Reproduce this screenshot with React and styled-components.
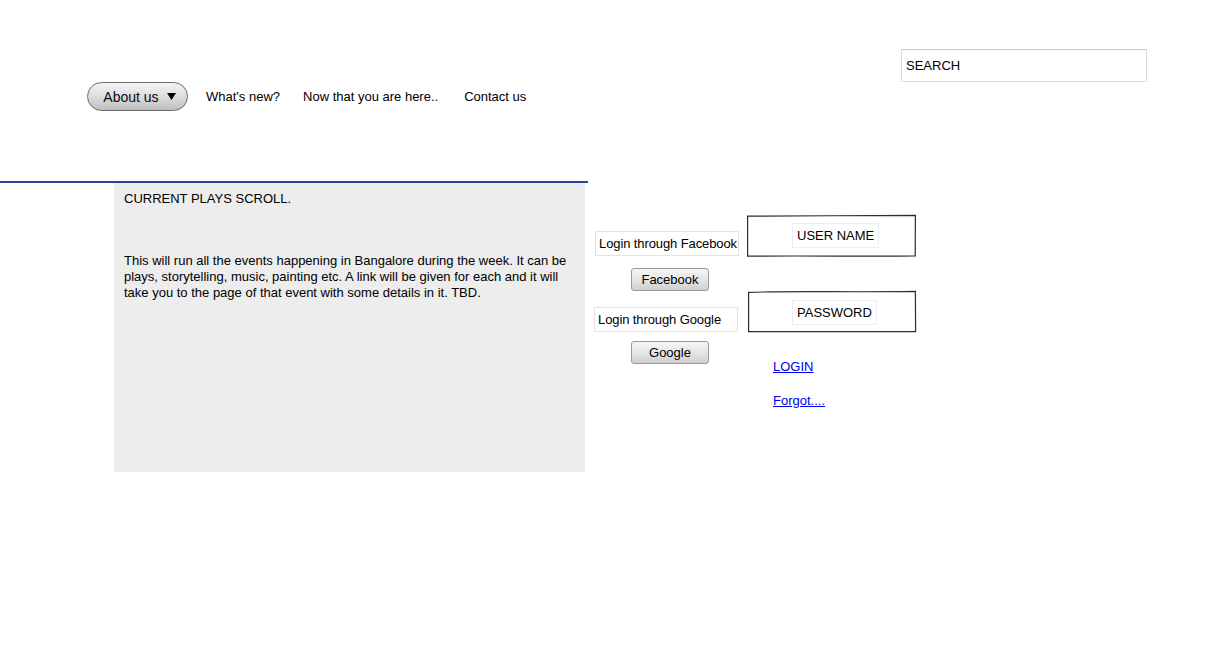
import React from "react";
import styled, { createGlobalStyle } from "styled-components";

const Global = createGlobalStyle`
  html, body { margin: 0; padding: 0; background: #fff; }
  body { font-family: "Liberation Sans", Arial, sans-serif; color: #000; }
`;

const Page = styled.div`
  width: 1211px;
  min-height: 667px;
  display: flex;
  flex-direction: column;
`;

const TopBar = styled.div`
  display: flex;
  justify-content: flex-end;
  padding: 49px 64px 0 0;
`;

const Search = styled.input`
  box-sizing: border-box;
  width: 246px;
  height: 33px;
  border: 1px solid #dcdcdc;
  border-top-color: #c8c8c8;
  padding: 0 4px;
  font: 13px "Liberation Sans", Arial, sans-serif;
  color: #000;
  outline: none;
  &::placeholder { color: #000; opacity: 1; }
`;

const Nav = styled.nav`
  display: flex;
  align-items: center;
  gap: 23px;
  padding-left: 87px;
  height: 29px;
`;

const MenuButton = styled.button`
  box-sizing: border-box;
  height: 29px;
  width: 101px;
  margin-right: -5px;
  border: 1px solid #6b6b6b;
  border-radius: 15px;
  background: linear-gradient(#f4f4f4, #e0e0e0 45%, #bebebe);
  display: flex;
  align-items: center;
  justify-content: center;
  gap: 8px;
  padding: 0 0 0 4px;
  font: 14px "Liberation Sans", Arial, sans-serif;
  color: #0a0a1a;
  cursor: pointer;
`;

const NavLink = styled.span`
  font-size: 13px;
  color: #000;
  white-space: nowrap;
  margin-left: ${(p) => p.$ml || 0}px;
`;

const Main = styled.div`
  display: flex;
  align-items: flex-start;
  margin-top: 70px;
`;

const LeftCol = styled.div`
  width: 588px;
  border-top: 2px solid #2c3f99;
`;

const Panel = styled.div`
  box-sizing: border-box;
  margin-left: 114px;
  width: 471px;
  height: 289px;
  background: #ededed;
  padding: 8px 10px 0 10px;
  font-size: 13px;
  line-height: 16px;
`;

const PanelTitle = styled.div`
  margin-bottom: 46px;
`;

const PanelText = styled.p`
  margin: 0;
`;

const MidCol = styled.div`
  display: flex;
  flex-direction: column;
  width: 144px;
  margin-left: 6px;
`;

const SocialInput = styled.input`
  box-sizing: border-box;
  width: 144px;
  height: 25px;
  margin-top: ${(p) => p.$top}px;
  margin-left: ${(p) => p.$shift || 0}px;
  border: 1px solid #e2e2e2;
  padding: 0 0 0 3px;
  font: 13px "Liberation Sans", Arial, sans-serif;
  letter-spacing: -0.1px;
  color: #000;
  background: #fff;
  outline: none;
`;

const GreyButton = styled.button`
  box-sizing: border-box;
  width: 78px;
  height: 23px;
  margin-top: ${(p) => p.$top}px;
  margin-left: 37px;
  border: 1px solid #9a9a9a;
  border-radius: 3px;
  background: linear-gradient(#f6f6f6, #e6e6e6 50%, #cfcfcf);
  font: 13px "Liberation Sans", Arial, sans-serif;
  color: #000;
  padding: 0;
  cursor: pointer;
`;

const RightCol = styled.div`
  display: flex;
  flex-direction: column;
  margin-left: 9px;
`;

const SketchBox = styled.div`
  position: relative;
  box-sizing: border-box;
  width: 169px;
  height: 42px;
  margin-top: ${(p) => p.$top}px;
  margin-left: ${(p) => p.$shift || 0}px;
  display: flex;
  align-items: flex-start;
  padding-left: ${(p) => 45 - (p.$shift || 0)}px;
  padding-top: ${(p) => p.$pt}px;
`;

const SketchFrame = styled.svg`
  position: absolute;
  inset: 0;
  width: 100%;
  height: 100%;
  overflow: visible;
  pointer-events: none;
`;

const FieldLabel = styled.div`
  box-sizing: border-box;
  position: relative;
  height: 25px;
  padding: 0 4px;
  border: 1px solid #e8eef4;
  background: #fff;
  font-size: 13px;
  line-height: 23px;
  white-space: nowrap;
`;

const TextLink = styled.a`
  margin-top: ${(p) => p.$top}px;
  margin-left: 26px;
  font-size: 13px;
  line-height: 15px;
  color: #0000ee;
  text-decoration: underline;
  align-self: flex-start;
  cursor: pointer;
`;

const Sketch = ({ d }) => (
  <SketchFrame viewBox="0 0 169 42" preserveAspectRatio="none">
    <path d={d} fill="none" stroke="#2e2e2e" strokeWidth="1.2" />
  </SketchFrame>
);

export default function App() {
  return (
    <Page>
      <Global />
      <TopBar>
        <Search placeholder="SEARCH" />
      </TopBar>
      <Nav>
        <MenuButton>
          About us
          <svg width="9" height="7" viewBox="0 0 9 7">
            <path d="M0 0 H9 L4.5 7 Z" fill="#000" />
          </svg>
        </MenuButton>
        <NavLink>What's new?</NavLink>
        <NavLink>Now that you are here..</NavLink>
        <NavLink $ml={3}>Contact us</NavLink>
      </Nav>
      <Main>
        <LeftCol>
          <Panel>
            <PanelTitle>CURRENT PLAYS SCROLL.</PanelTitle>
            <PanelText>
              This will run all the events happening in Bangalore during the week. It can be
              plays, storytelling, music, painting etc. A link will be given for each and it will
              take you to the page of that event with some details in it. TBD.
            </PanelText>
          </Panel>
        </LeftCol>
        <MidCol>
          <SocialInput $top={50} $shift={1} defaultValue="Login through Facebook" readOnly />
          <GreyButton $top={12}>Facebook</GreyButton>
          <SocialInput $top={16} defaultValue="Login through Google" readOnly />
          <GreyButton $top={9}>Google</GreyButton>
        </MidCol>
        <RightCol>
          <SketchBox $top={34} $pt={8}>
            <Sketch d="M0.6 1.2 C50 0.6 120 0.8 168.4 0.4 L168.2 41 C120 41.6 60 40.6 0.6 41.2 Z" />
            <FieldLabel>USER NAME</FieldLabel>
          </SketchBox>
          <SketchBox $top={34} $shift={1} $pt={9}>
            <Sketch d="M0.6 1.4 C40 -0.2 100 1.4 167.4 0.4 L167.6 40.6 C110 40.8 50 40.6 0.6 40.6 Z" />
            <FieldLabel>PASSWORD</FieldLabel>
          </SketchBox>
          <TextLink $top={26}>LOGIN</TextLink>
          <TextLink $top={19}>Forgot....</TextLink>
        </RightCol>
      </Main>
    </Page>
  );
}
